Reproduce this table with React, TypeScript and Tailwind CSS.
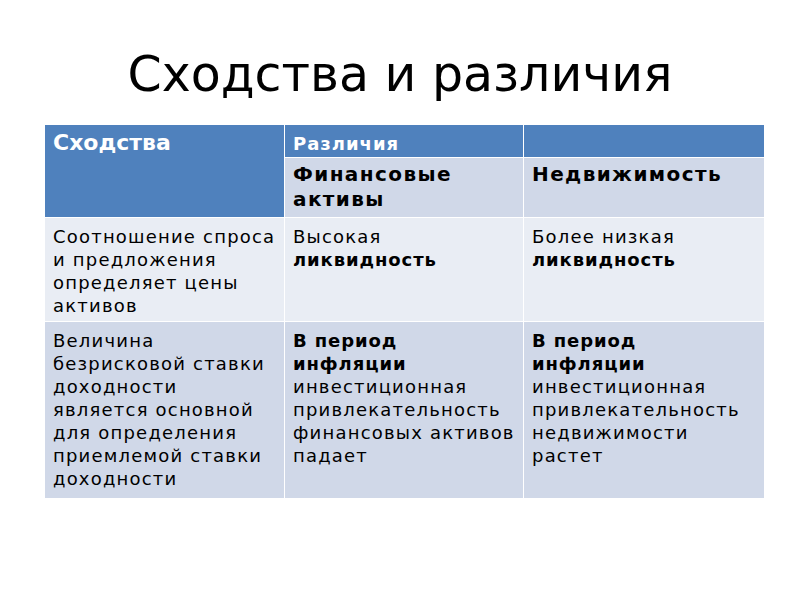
export default function App() {
  const font = { fontFamily: '"DejaVu Sans", "Noto Sans", sans-serif' };
  return (
    <div className="w-[800px] h-[600px] bg-white overflow-hidden" style={font}>
      <h1 className="pt-[47px] h-[125px] text-center text-[49px] leading-[56px] text-black">Сходства и различия</h1>
      <div className="ml-[45px] w-[719px] grid grid-cols-[239px_238px_240px] grid-rows-[32px_59px_103px_176px] gap-[1px] bg-white text-[18px] leading-[23px] tracking-[1.2px] text-black">
        <div className="row-span-2 bg-[#4f81bd] text-white font-bold text-[22px] leading-[26px] tracking-normal px-[8px] pt-[5px]">Сходства</div>
        <div className="bg-[#4f81bd] text-white font-bold tracking-[1px] px-[8px] pt-[7px]">Различия</div>
        <div className="bg-[#4f81bd]"></div>
        <div className="bg-[#d0d8e8] font-bold text-[20px] leading-[25px] tracking-[1.4px] px-[8px] pt-[4px]">Финансовые активы</div>
        <div className="bg-[#d0d8e8] font-bold text-[20px] leading-[25px] tracking-[1.4px] px-[8px] pt-[4px]">Недвижимость</div>
        <div className="bg-[#e9edf4] px-[8px] pt-[7px]">Соотношение спроса и предложения определяет цены активов</div>
        <div className="bg-[#e9edf4] px-[8px] pt-[7px]">Высокая <b className="tracking-[0.9px]">ликвидность</b></div>
        <div className="bg-[#e9edf4] px-[8px] pt-[7px]">Более низкая <b className="tracking-[0.9px]">ликвидность</b></div>
        <div className="bg-[#d0d8e8] px-[8px] pt-[7px]">Величина безрисковой ставки доходности является основной для определения приемлемой ставки доходности</div>
        <div className="bg-[#d0d8e8] px-[8px] pt-[7px]"><b className="tracking-[0.9px]">В период инфляции</b> инвестиционная привлекательность финансовых активов падает</div>
        <div className="bg-[#d0d8e8] px-[8px] pt-[7px]"><b className="tracking-[0.9px]">В период инфляции</b> инвестиционная привлекательность недвижимости растет</div>
      </div>
    </div>
  );
}
